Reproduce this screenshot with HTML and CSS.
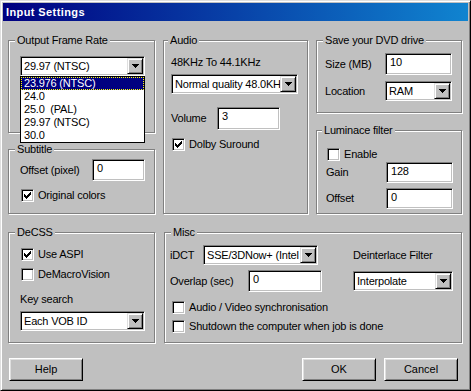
FILE: index.html
```html
<!DOCTYPE html>
<html lang="en">

<head>
  <meta charset="UTF-8" />
  <title>Input Settings</title>
  <link rel="stylesheet" href="styles.css">
</head>

<body>

  <div class="window">
    <div class="titlebar">Input Settings</div>

    <div class="content">

      <div class="column">
        <div class="group group-rate">
          <span class="group-title">Output Frame Rate</span>
          <div class="combo rate-combo">
            <span class="combo-text">29.97 (NTSC)</span>
            <span class="combo-btn"><svg viewBox="0 0 7 4" width="7" height="4"><path d="M0 0h7v1h-7zM1 1h5v1h-5zM2 2h3v1h-3zM3 3h1v1h-1z"/></svg></span>
            <ul class="droplist">
              <li class="selected">23.976 (NTSC)</li>
              <li>24.0</li>
              <li>25.0 &nbsp;(PAL)</li>
              <li>29.97 (NTSC)</li>
              <li>30.0</li>
            </ul>
          </div>
        </div>

        <div class="group group-subtitle">
          <span class="group-title">Subtitle</span>
          <div class="field-row subtitle-offset">
            <span class="label">Offset (pixel)</span>
            <span class="edit">0</span>
          </div>
          <div class="check-row subtitle-colors">
            <span class="check"><svg viewBox="0 0 7 7" width="7" height="7"><path d="M6 0h1v1h-1zM5 1h2v1h-2zM0 2h1v1h-1zM4 2h3v1h-3zM0 3h2v1h-2zM3 3h3v1h-3zM0 4h5v1h-5zM1 5h3v1h-3zM2 6h1v1h-1z"/></svg></span>
            <span>Original colors</span>
          </div>
        </div>
      </div>

      <div class="group group-audio">
        <span class="group-title">Audio</span>
        <span class="label audio-rate">48KHz To 44.1KHz</span>
        <div class="combo audio-combo">
          <span class="combo-text">Normal quality 48.0KHz</span>
          <span class="combo-btn"><svg viewBox="0 0 7 4" width="7" height="4"><path d="M0 0h7v1h-7zM1 1h5v1h-5zM2 2h3v1h-3zM3 3h1v1h-1z"/></svg></span>
        </div>
        <div class="field-row audio-volume">
          <span class="label">Volume</span>
          <span class="edit">3</span>
        </div>
        <div class="check-row audio-dolby">
          <span class="check"><svg viewBox="0 0 7 7" width="7" height="7"><path d="M6 0h1v1h-1zM5 1h2v1h-2zM0 2h1v1h-1zM4 2h3v1h-3zM0 3h2v1h-2zM3 3h3v1h-3zM0 4h5v1h-5zM1 5h3v1h-3zM2 6h1v1h-1z"/></svg></span>
          <span>Dolby Suround</span>
        </div>
      </div>

      <div class="column">
        <div class="group group-drive">
          <span class="group-title">Save your DVD drive</span>
          <div class="field-row drive-size">
            <span class="label">Size (MB)</span>
            <span class="edit">10</span>
          </div>
          <div class="field-row drive-location">
            <span class="label">Location</span>
            <div class="combo">
              <span class="combo-text">RAM</span>
              <span class="combo-btn"><svg viewBox="0 0 7 4" width="7" height="4"><path d="M0 0h7v1h-7zM1 1h5v1h-5zM2 2h3v1h-3zM3 3h1v1h-1z"/></svg></span>
            </div>
          </div>
        </div>

        <div class="group group-luma">
          <span class="group-title">Luminace filter</span>
          <div class="check-row luma-enable">
            <span class="check"></span>
            <span>Enable</span>
          </div>
          <div class="field-row luma-gain">
            <span class="label">Gain</span>
            <span class="edit">128</span>
          </div>
          <div class="field-row luma-offset">
            <span class="label">Offset</span>
            <span class="edit">0</span>
          </div>
        </div>
      </div>

      <div class="group group-decss">
        <span class="group-title">DeCSS</span>
        <div class="check-row decss-aspi">
          <span class="check"><svg viewBox="0 0 7 7" width="7" height="7"><path d="M6 0h1v1h-1zM5 1h2v1h-2zM0 2h1v1h-1zM4 2h3v1h-3zM0 3h2v1h-2zM3 3h3v1h-3zM0 4h5v1h-5zM1 5h3v1h-3zM2 6h1v1h-1z"/></svg></span>
          <span>Use ASPI</span>
        </div>
        <div class="check-row decss-macro">
          <span class="check"></span>
          <span>DeMacroVision</span>
        </div>
        <span class="label decss-key">Key search</span>
        <div class="combo decss-combo">
          <span class="combo-text">Each VOB ID</span>
          <span class="combo-btn"><svg viewBox="0 0 7 4" width="7" height="4"><path d="M0 0h7v1h-7zM1 1h5v1h-5zM2 2h3v1h-3zM3 3h1v1h-1z"/></svg></span>
        </div>
      </div>

      <div class="group group-misc">
        <span class="group-title">Misc</span>
        <div class="field-row misc-idct">
          <span class="label">iDCT</span>
          <div class="combo">
            <span class="combo-text">SSE/3DNow+ (Intel IDCT)</span>
            <span class="combo-btn"><svg viewBox="0 0 7 4" width="7" height="4"><path d="M0 0h7v1h-7zM1 1h5v1h-5zM2 2h3v1h-3zM3 3h1v1h-1z"/></svg></span>
          </div>
          <span class="label deint-label">Deinterlace Filter</span>
        </div>
        <div class="field-row misc-overlap">
          <span class="label">Overlap (sec)</span>
          <span class="edit">0</span>
          <div class="combo deint-combo">
            <span class="combo-text">Interpolate</span>
            <span class="combo-btn"><svg viewBox="0 0 7 4" width="7" height="4"><path d="M0 0h7v1h-7zM1 1h5v1h-5zM2 2h3v1h-3zM3 3h1v1h-1z"/></svg></span>
          </div>
        </div>
        <div class="check-row misc-sync">
          <span class="check"></span>
          <span>Audio / Video synchronisation</span>
        </div>
        <div class="check-row misc-shutdown">
          <span class="check"></span>
          <span>Shutdown the computer when job is done</span>
        </div>
      </div>

    </div>

    <div class="buttons">
      <button class="action">Help</button>
      <button class="action action-ok">OK</button>
      <button class="action">Cancel</button>
    </div>
  </div>

</body>

</html>
```

FILE: styles.css
```css
* {
  box-sizing: border-box;
}

body {
  margin: 0;
  background-color: #c0c0c0;
  color: #000;
  font-family: "Liberation Sans", Arial, sans-serif;
  font-size: 11px;
  line-height: 13px;
  letter-spacing: -0.2px;
}

.window {
  width: 471px;
  height: 391px;
  display: flex;
  flex-direction: column;
  padding: 2px;
  background-color: #c0c0c0;
  border: 1px solid;
  border-color: #dfdfdf #000 #000 #dfdfdf;
  box-shadow: inset 1px 1px #fff, inset -1px -1px #808080;
}

.titlebar {
  height: 18px;
  padding-left: 3px;
  line-height: 18px;
  color: #fff;
  font-weight: bold;
  letter-spacing: 0.4px;
  background: linear-gradient(to right, #000080, #1084d0);
}

/* main area: three columns, two rows of group boxes */
.content {
  display: grid;
  grid-template-columns: 147px 145px 146px;
  grid-template-rows: 174px 111px;
  column-gap: 8px;
  row-gap: 18px;
  padding: 19px 0 0 5px;
}

.column {
  display: flex;
  flex-direction: column;
  justify-content: space-between;
}

.group {
  --pad: 11px;
  --title: 6px;
  display: flex;
  flex-direction: column;
  align-items: flex-start;
  border: 1px solid #808080;
  box-shadow: inset 1px 1px #fff, 1px 1px #fff;
  padding-left: var(--pad);
}

.group-title {
  margin: -7px 0 0 calc(var(--title) - var(--pad));
  padding: 0 2px;
  line-height: 13px;
  background-color: #c0c0c0;
  white-space: nowrap;
}

.group-rate {
  height: 93px;
}

.group-subtitle {
  height: 65px;
}

.group-drive {
  --pad: 8px;
  height: 73px;
}

.group-luma {
  --pad: 9px;
  --title: 5px;
  height: 84px;
}

.group-audio {
  --pad: 7px;
  --title: 4px;
}

.group-misc {
  --pad: 5px;
  grid-column: 2 / 4;
  margin-left: 1px;
}

/* controls */
.label {
  flex: none;
  white-space: nowrap;
}

.field-row {
  display: flex;
  align-items: center;
}

.check-row {
  display: flex;
  align-items: center;
  margin-left: 1px;
  white-space: nowrap;
}

.check {
  width: 13px;
  height: 13px;
  margin-right: 4px;
  display: flex;
  align-items: center;
  justify-content: center;
  background-color: #fff;
  border: 1px solid;
  border-color: #808080 #fff #fff #808080;
  box-shadow: inset 1px 1px #000, inset -1px -1px #c0c0c0;
}

.edit {
  height: 21px;
  padding: 2px 4px;
  background-color: #fff;
  border: 1px solid;
  border-color: #808080 #fff #fff #808080;
  box-shadow: inset 1px 1px #000, inset -1px -1px #c0c0c0;
  align-self: flex-start;
}

.combo {
  position: relative;
  height: 20px;
  display: flex;
  align-items: center;
  padding: 1px;
  background-color: #fff;
  border: 1px solid;
  border-color: #808080 #fff #fff #808080;
  box-shadow: inset 1px 1px #000, inset -1px -1px #c0c0c0;
}

.combo-text {
  flex: 1;
  padding-left: 2px;
  overflow: hidden;
  white-space: nowrap;
}

.combo-btn {
  flex: none;
  width: 16px;
  height: 16px;
  display: flex;
  align-items: center;
  justify-content: center;
  background-color: #c0c0c0;
  border: 1px solid;
  border-color: #dfdfdf #000 #000 #dfdfdf;
  box-shadow: inset 1px 1px #fff, inset -1px -1px #808080;
}

.droplist {
  position: absolute;
  z-index: 2;
  left: -1px;
  right: -1px;
  top: calc(100% + 1px);
  margin: 0;
  padding: 0;
  list-style: none;
  background-color: #fff;
  border: 1px solid #000;
}

.droplist li {
  height: 13px;
  padding-left: 3px;
  white-space: nowrap;
}

.droplist .selected {
  color: #fff;
  background-color: #000080;
  outline: 1px dotted #ffff00;
  outline-offset: -1px;
}

/* output frame rate */
.rate-combo {
  width: 125px;
  margin-top: 9px;
}

/* subtitle */
.subtitle-offset {
  margin-top: 3px;
}

.subtitle-offset .label {
  width: 72px;
}

.subtitle-offset .edit {
  width: 53px;
  height: 22px;
}

.subtitle-colors {
  margin-top: 8px;
}

/* audio */
.audio-rate {
  margin-top: 9px;
}

.audio-combo {
  width: 127px;
  margin-top: 5px;
}

.audio-volume {
  margin-top: 13px;
}

.audio-volume .label {
  width: 46px;
}

.audio-volume .edit {
  width: 63px;
  height: 23px;
}

.audio-dolby {
  margin-top: 8px;
}

/* dvd drive */
.drive-size {
  margin-top: 6px;
}

.drive-size .edit {
  height: 22px;
}

.drive-location {
  margin-top: 6px;
}

.group-drive .label,
.group-luma .label {
  width: 60px;
}

.group-drive .edit,
.group-drive .combo,
.group-luma .edit {
  width: 67px;
}

/* luminance */
.luma-enable {
  margin-top: 11px;
}

.luma-gain {
  margin-top: 1px;
}

.luma-offset {
  margin-top: 5px;
}

/* decss */
.decss-aspi {
  margin-top: 9px;
}

.decss-macro {
  margin-top: 7px;
}

.decss-key {
  margin-top: 12px;
}

.decss-combo {
  width: 125px;
  margin-top: 5px;
}

/* misc */
.misc-idct {
  margin-top: 6px;
}

.misc-idct .label {
  width: 33px;
}

.misc-idct .combo {
  width: 115px;
}

.misc-idct .deint-label {
  margin-left: 35px;
}

.misc-overlap {
  margin-top: 5px;
  height: 22px;
}

.misc-overlap .label {
  width: 78px;
}

.misc-overlap .edit {
  width: 74px;
  height: 22px;
}

.deint-combo {
  width: 100px;
  margin-left: 31px;
}

.misc-sync {
  margin-top: 9px;
  margin-left: 2px;
}

.misc-shutdown {
  margin-top: 6px;
  margin-left: 2px;
}

/* dialog buttons */
.buttons {
  display: flex;
  gap: 8px;
  margin-top: 15px;
  padding: 0 10px 0 6px;
}

.action {
  width: 74px;
  height: 23px;
  padding: 0;
  font: inherit;
  color: #000;
  background-color: #c0c0c0;
  border: 1px solid;
  border-color: #fff #000 #000 #fff;
  box-shadow: inset 1px 1px #dfdfdf, inset -1px -1px #808080;
}

.action-ok {
  margin-left: auto;
}
```
